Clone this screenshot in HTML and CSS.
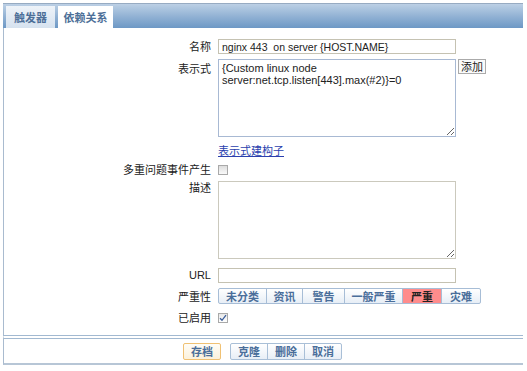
FILE: index.html
```html
<!DOCTYPE html>
<html lang="zh">

<head>
	<meta charset="UTF-8">
	<title>触发器</title>
	<link rel="stylesheet" href="styles.css">
</head>

<body>

	<div class="page">
		<div class="tabBar">
			<span class="tab active">触发器</span>
			<span class="tab">依赖关系</span>
		</div>

		<section class="panel">
			<div class="formGrid">
				<label class="lbl rowName">名称</label>
				<div class="field rowName">
					<input type="text" class="textInput" value="nginx 443  on server {HOST.NAME}">
				</div>

				<label class="lbl rowExpr topLbl">表示式</label>
				<div class="field rowExpr">
					<textarea class="area exprArea">{Custom linux node server:net.tcp.listen[443].max(#2)}=0</textarea>
					<button class="addBtn">添加</button>
				</div>

				<span class="lbl rowLink"></span>
				<div class="field rowLink">
					<a href="#" class="link">表示式建构子</a>
				</div>

				<label class="lbl rowCheck">多重问题事件产生</label>
				<div class="field rowCheck">
					<span class="check"></span>
				</div>

				<label class="lbl rowDesc topLbl2">描述</label>
				<div class="field rowDesc">
					<textarea class="area"></textarea>
				</div>

				<label class="lbl rowUrl latin">URL</label>
				<div class="field rowUrl">
					<input type="text" class="textInput">
				</div>

				<label class="lbl rowSev">严重性</label>
				<div class="field rowSev">
					<div class="sevGroup">
						<span class="sev">未分类</span>
						<span class="sev">资讯</span>
						<span class="sev">警告</span>
						<span class="sev">一般严重</span>
						<span class="sev selected">严重</span>
						<span class="sev">灾难</span>
					</div>
				</div>

				<label class="lbl rowOn">已启用</label>
				<div class="field rowOn">
					<span class="check checked">
						<svg width="8" height="8" viewBox="0 0 8 8">
							<path d="M1 4.2 L3 6.3 L7 1.2" fill="none" stroke="#3a5d9a" stroke-width="1.3" />
						</svg>
					</span>
				</div>
			</div>
		</section>

		<footer class="footBar">
			<button class="footBtn save">存档</button>
			<div class="footGroup">
				<button class="footBtn">克隆</button>
				<button class="footBtn">删除</button>
				<button class="footBtn">取消</button>
			</div>
		</footer>
	</div>

</body>

</html>
```

FILE: styles.css
```css
* {
	margin: 0;
	padding: 0;
	box-sizing: border-box;
}

body {
	font-family: "Liberation Sans", "Noto Sans CJK SC", sans-serif;
	font-size: 11px;
	color: #222;
	background-color: #fff;
}

.page {
	margin: 3px 4px 0 3px;
}

.tabBar {
	height: 25px;
	display: flex;
	align-items: flex-end;
	gap: 3px;
	padding-left: 3px;
	border-top: 1px solid #97abc2;
	background: linear-gradient(#bcd0e5, #8fb0d3 55%, #6d98c5);
}

.tab {
	display: flex;
	align-items: center;
	justify-content: center;
	height: 22px;
	font-family: "Noto Sans CJK SC", sans-serif;
	font-size: 11px;
	font-weight: bold;
	color: #4d6f98;
	background-color: #fff;
}

.tab:first-child {
	width: 49px;
	background: linear-gradient(#eef3f9, #d6e2ef);
}

.tab:last-child {
	width: 55px;
}

.panel {
	border-left: 1px solid #a9bbcf;
	padding: 11px 0 9px 0;
}

.formGrid {
	display: grid;
	grid-template-columns: 207px 1fr;
	column-gap: 7px;
	row-gap: 5px;
}

.lbl {
	display: flex;
	align-items: center;
	justify-content: flex-end;
	font-family: "Noto Sans CJK SC", sans-serif;
	font-size: 11px;
	line-height: 13px;
	color: #222;
}

.latin {
	font-family: "Liberation Sans", sans-serif;
}

.topLbl {
	align-items: flex-start;
	padding-top: 3px;
}

.topLbl2 {
	align-items: flex-start;
	padding-top: 0;
}

.field {
	display: flex;
	align-items: center;
}

.rowName {
	height: 15px;
}

.rowExpr {
	height: 78px;
	align-items: flex-start;
}

.rowLink {
	height: 16px;
}

.rowCheck {
	height: 13px;
}

.rowDesc {
	height: 78px;
	align-items: flex-start;
}

.rowUrl {
	height: 15px;
	margin-top: 4px;
}

.rowSev {
	height: 16px;
}

.rowOn {
	height: 17px;
}

.textInput {
	width: 238px;
	height: 15px;
	border: 1px solid #c5c2b2;
	padding: 0 3px;
	font-family: "Liberation Sans", sans-serif;
	font-size: 10.5px;
	color: #222;
	outline: 0;
}

.area {
	width: 238px;
	height: 78px;
	border: 1px solid #cbc9bd;
	padding: 2px 3px;
	font-family: "Liberation Sans", sans-serif;
	font-size: 11px;
	line-height: 12px;
	color: #222;
	outline: 0;
}

.exprArea {
	border-color: #a8b9d3;
}

.addBtn {
	margin-left: 2px;
	width: 28px;
	height: 15px;
	border: 1px solid #aaa;
	background-color: #fafafa;
	font-family: "Noto Sans CJK SC", sans-serif;
	font-size: 11px;
	line-height: 11px;
	color: #222;
}

.link {
	font-family: "Noto Sans CJK SC", sans-serif;
	font-size: 11px;
	color: #2b3fae;
	text-decoration: underline;
}

.check {
	display: flex;
	align-items: center;
	justify-content: center;
	width: 10px;
	height: 10px;
	border: 1px solid #a9a9a9;
	background: linear-gradient(#ddd, #fafafa);
}

.check.checked {
	background: linear-gradient(#e8e8e8, #fff);
}

.sevGroup {
	display: flex;
}

.sev {
	display: flex;
	align-items: center;
	justify-content: center;
	height: 16px;
	border: 1px solid #a7bdd6;
	margin-left: -1px;
	background: linear-gradient(#fff, #e7eef6);
	font-family: "Noto Sans CJK SC", sans-serif;
	font-size: 11px;
	font-weight: bold;
	color: #4a6e9a;
}

.sev:first-child {
	margin-left: 0;
	width: 49px;
	border-radius: 2px 0 0 2px;
}

.sev:nth-child(2) {
	width: 37px;
}

.sev:nth-child(3) {
	width: 43px;
}

.sev:nth-child(4) {
	width: 59px;
}

.sev:nth-child(5) {
	width: 40px;
}

.sev:nth-child(6) {
	width: 40px;
	border-radius: 0 2px 2px 0;
}

.sev.selected {
	background: #ff8c8c;
	color: #222;
}

.footBar {
	height: 30px;
	display: flex;
	align-items: center;
	justify-content: center;
	gap: 10px;
	padding-right: 2px;
	border-top: 4px double #a2b9d1;
	border-bottom: 2px solid #b7c6d6;
	border-left: 1px solid #a9bbcf;
	box-shadow: 0 2px 0 #eef0f3;
}

.footGroup {
	display: flex;
}

.footBtn {
	width: 38px;
	height: 17px;
	border: 1px solid #a9bfd7;
	background: linear-gradient(#fff, #e8eef6);
	font-family: "Noto Sans CJK SC", sans-serif;
	font-size: 11px;
	line-height: 11px;
	font-weight: bold;
	color: #4a6e9a;
}

.footGroup .footBtn {
	margin-left: -1px;
}

.footGroup .footBtn:first-child {
	border-radius: 2px 0 0 2px;
}

.footGroup .footBtn:last-child {
	border-radius: 0 2px 2px 0;
}

.footBtn.save {
	border-color: #f0c173;
	background: linear-gradient(#fffdf7, #fbf1dc);
	border-radius: 2px;
}
```
